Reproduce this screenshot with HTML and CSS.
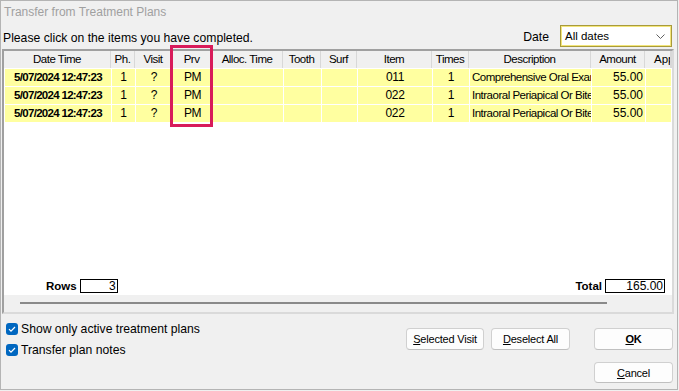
FILE: index.html
```html
<!DOCTYPE html>
<html lang="en">
<head>
  <meta charset="UTF-8">
  <title>Transfer from Treatment Plans</title>
  <link rel="stylesheet" href="styles.css">
</head>
<body>
  <div class="window">
    <div class="titlebar">Transfer from Treatment Plans</div>

    <div class="toolbar">
      <span class="prompt">Please click on the items you have completed.</span>
      <span class="date-label">Date</span>
      <div class="combo">
        <span>All dates</span>
        <svg class="combo-arrow" width="9" height="5" viewBox="0 0 9 5"><path d="M0.5 0.5 L4.5 4.5 L8.5 0.5" fill="none" stroke="#606060" stroke-width="1"/></svg>
      </div>
    </div>

    <div class="grid">
      <div class="grid-body">
        <div class="grid-head">
          <div>Date Time</div>
          <div>Ph.</div>
          <div>Visit</div>
          <div>Prv</div>
          <div>Alloc. Time</div>
          <div>Tooth</div>
          <div>Surf</div>
          <div>Item</div>
          <div>Times</div>
          <div>Description</div>
          <div>Amount</div>
          <div class="c-clip">Appt</div>
        </div>

        <div class="grid-row">
          <div class="c-date">5/07/2024 12:47:23</div>
          <div>1</div>
          <div>?</div>
          <div>PM</div>
          <div></div>
          <div></div>
          <div></div>
          <div>011</div>
          <div>1</div>
          <div class="c-desc">Comprehensive Oral Examination</div>
          <div class="c-amount">55.00</div>
          <div></div>
        </div>
        <div class="grid-row">
          <div class="c-date">5/07/2024 12:47:23</div>
          <div>1</div>
          <div>?</div>
          <div>PM</div>
          <div></div>
          <div></div>
          <div></div>
          <div>022</div>
          <div>1</div>
          <div class="c-desc">Intraoral Periapical Or Bitewing</div>
          <div class="c-amount">55.00</div>
          <div></div>
        </div>
        <div class="grid-row">
          <div class="c-date">5/07/2024 12:47:23</div>
          <div>1</div>
          <div>?</div>
          <div>PM</div>
          <div></div>
          <div></div>
          <div></div>
          <div>022</div>
          <div>1</div>
          <div class="c-desc">Intraoral Periapical Or Bitewing</div>
          <div class="c-amount">55.00</div>
          <div></div>
        </div>

        <div class="grid-footer">
          <div class="summary">
            <span class="summary-label">Rows</span>
            <span class="summary-box rows-box">3</span>
          </div>
          <div class="summary">
            <span class="summary-label">Total</span>
            <span class="summary-box total-box">165.00</span>
          </div>
        </div>
      </div>
      <div class="hscroll"><div class="hscroll-thumb"></div></div>
    </div>

    <div class="bottom">
      <div class="options">
        <label class="check">
          <span class="check-box"><svg width="12" height="12" viewBox="0 0 12 12"><path d="M3 6.2 L5 8.2 L9 4" fill="none" stroke="#fff" stroke-width="1.2"/></svg></span>
          Show only active treatment plans
        </label>
        <label class="check">
          <span class="check-box"><svg width="12" height="12" viewBox="0 0 12 12"><path d="M3 6.2 L5 8.2 L9 4" fill="none" stroke="#fff" stroke-width="1.2"/></svg></span>
          Transfer plan notes
        </label>
      </div>
      <div class="actions">
        <button class="btn btn-visit"><u>S</u>elected Visit</button>
        <button class="btn btn-deselect"><u>D</u>eselect All</button>
      </div>
      <div class="dialog-buttons">
        <button class="btn btn-ok"><u>O</u>K</button>
        <button class="btn btn-cancel"><u>C</u>ancel</button>
      </div>
    </div>

    <div class="highlight"></div>
  </div>
</body>
</html>
```

FILE: styles.css
```css
body {
  margin: 0;
  padding: 0;
  background-color: #f0f0f0;
  font-family: 'Liberation Sans', Arial, sans-serif;
  font-size: 12.2px;
  color: #000;
}

.window {
  position: relative;
  box-sizing: border-box;
  width: 678px;
  height: 390px;
  border: 1px solid #b4b4b4;
  background-color: #f0f0f0;
  display: flex;
  flex-direction: column;
  overflow: hidden;
}

.titlebar {
  height: 24px;
  line-height: 23px;
  padding-left: 3px;
  font-size: 12px;
  color: #a0a0a0;
}

.toolbar {
  height: 24px;
  display: flex;
  align-items: center;
  padding-left: 2px;
  padding-right: 5px;
}

.prompt {
  flex-grow: 1;
  margin-top: 1px;
}

.date-label {
  margin-right: 11px;
}

.combo {
  box-sizing: border-box;
  width: 112px;
  height: 22px;
  margin-top: -2px;
  display: flex;
  align-items: center;
  justify-content: space-between;
  padding: 0 6px 0 4px;
  background-color: #fff;
  border: 1px solid #a89a3c;
  box-shadow: inset 0 0 0 1px #f3e67a;
  font-size: 11.5px;
}

.grid {
  box-sizing: border-box;
  height: 265px;
  width: 672px;
  margin: 0 3px 0 1px;
  border: 2px solid;
  border-color: #a0a0a0 #dadada #dadada #a0a0a0;
  display: flex;
  flex-direction: column;
  overflow: hidden;
}

.grid-body {
  flex-grow: 1;
  min-width: 0;
  display: flex;
  flex-direction: column;
  background-color: #fff;
  overflow: hidden;
}

.grid-head,
.grid-row {
  display: grid;
  grid-template-columns: 106px 23px 36px 39px 70px 37px 35px 74px 36px 121px 53px 25px;
  column-gap: 1px;
  font-size: 11.5px;
  letter-spacing: -0.5px;
}

.grid-head {
  height: 17px;
  background-color: #d8d8d8;
  border-bottom: 1px solid #fff;
}

.grid-head div {
  background-color: #f0f0f0;
  text-align: center;
  line-height: 17px;
  white-space: nowrap;
  overflow: hidden;
}

.grid-head .c-clip {
  text-align: left;
  padding-left: 9px;
  letter-spacing: 0;
}

.grid-row {
  height: 17px;
  margin-bottom: 1px;
  padding-left: 1px;
  font-size: 12px;
  letter-spacing: -0.4px;
}

.grid-row div {
  background-color: #ffffa0;
  text-align: center;
  line-height: 17px;
  white-space: nowrap;
  overflow: hidden;
}

.grid-row .c-date {
  font-weight: bold;
  font-size: 11.5px;
  letter-spacing: -0.7px;
}

.grid-row .c-desc {
  text-align: left;
  padding-left: 2px;
  font-size: 11.5px;
  letter-spacing: -0.5px;
}

.grid-row .c-amount {
  text-align: right;
  padding-right: 2px;
  letter-spacing: 0;
}

.grid-footer {
  margin-top: auto;
  padding: 0 7px 2px 42px;
  display: flex;
  justify-content: space-between;
  align-items: center;
}

.summary {
  display: flex;
  align-items: center;
  gap: 3px;
}

.summary-label {
  font-weight: bold;
  font-size: 11.5px;
}

.summary-box {
  box-sizing: border-box;
  height: 14px;
  border: 1px solid #000;
  background-color: #fff;
  text-align: right;
  font-size: 12px;
  line-height: 12px;
  padding-right: 1px;
}

.rows-box {
  width: 38px;
}

.total-box {
  width: 60px;
}

.hscroll {
  height: 17px;
  flex-shrink: 0;
  background-color: #f0f0f0;
  padding-left: 16px;
  padding-top: 7px;
  box-sizing: border-box;
}

.hscroll-thumb {
  width: 587px;
  height: 2px;
  background-color: #8a8a8a;
}

.bottom {
  flex-grow: 1;
  display: flex;
  padding: 8px 4px 0 5px;
}

.options {
  display: flex;
  flex-direction: column;
  gap: 8px;
}

.check {
  display: flex;
  align-items: center;
  gap: 3px;
  height: 13px;
}

.check-box {
  width: 12px;
  height: 12px;
  border-radius: 3px;
  background-color: #0067c0;
  display: flex;
}

.actions {
  margin-left: auto;
  display: flex;
  gap: 7px;
  align-items: flex-start;
  padding-top: 6px;
}

.dialog-buttons {
  margin-left: 24px;
  display: flex;
  flex-direction: column;
  gap: 12px;
  padding-top: 6px;
}

.btn {
  box-sizing: border-box;
  width: 79px;
  height: 22px;
  padding: 0;
  border: 1px solid #d0d0d0;
  border-bottom-color: #c0c0c0;
  border-radius: 4px;
  background-color: #fdfdfd;
  font-family: 'Liberation Sans', Arial, sans-serif;
  font-size: 11px;
  letter-spacing: -0.2px;
  color: #000;
}

.btn-visit {
  width: 78px;
}

.btn-ok {
  font-weight: bold;
}

.btn-cancel {
  height: 21px;
}

.highlight {
  position: absolute;
  left: 169px;
  top: 44px;
  width: 43px;
  height: 82px;
  box-sizing: border-box;
  border: 3px solid #d81b5a;
}
```
